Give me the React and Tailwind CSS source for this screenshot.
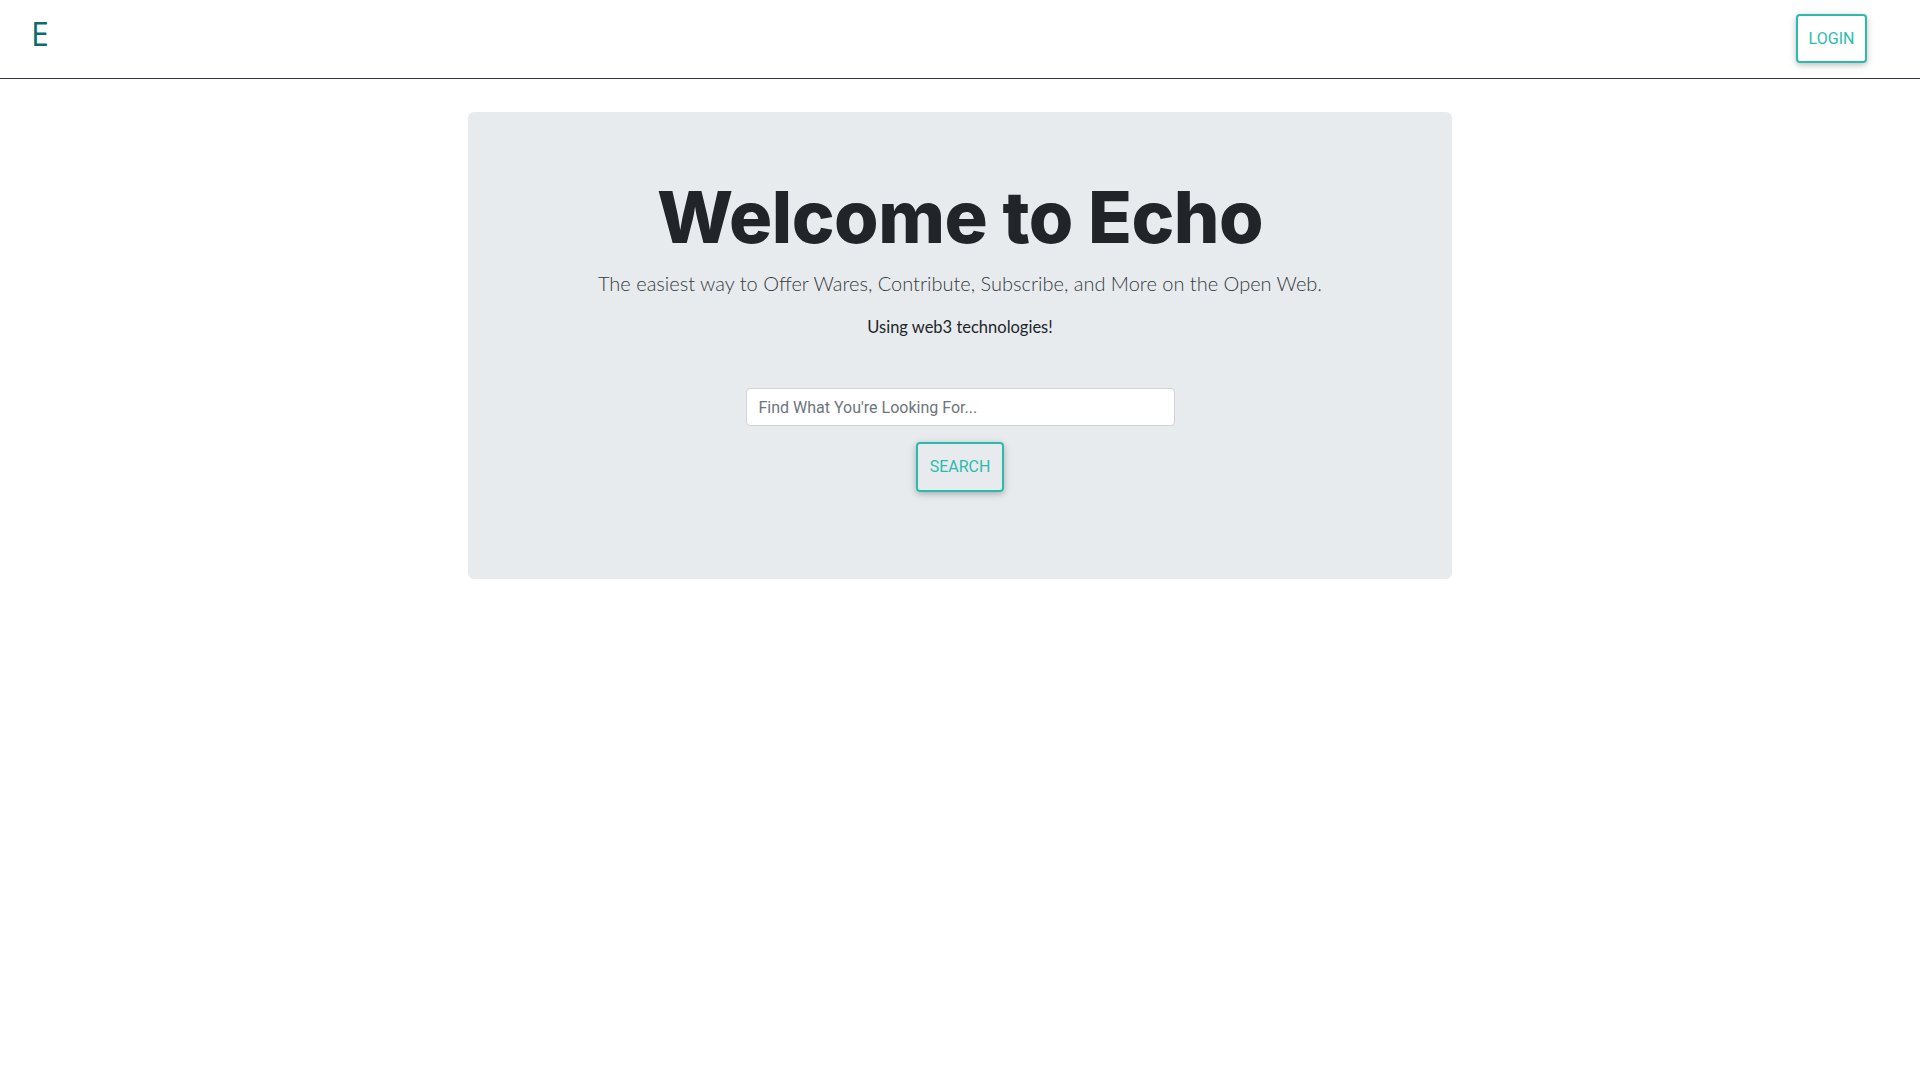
import { useState } from "react";

export default function App() {
  const [query, setQuery] = useState("");

  return (
    <div className="min-h-screen bg-white" style={{ fontFamily: "Roboto, sans-serif" }}>
      <nav className="h-[79px] border-b border-[#343a40] flex items-start justify-between pl-[31px] pr-[53px]">
        <a
          href="#"
          className="mt-[12px] text-[32px] leading-[44px] text-[#0f6a6d] font-['Open_Sans',sans-serif]"
        >
          E
        </a>
        <button className="mt-[14px] w-[71px] h-[49px] border-2 border-[#2bbbad] rounded-[4px] text-[#2bbbad] text-[16px] shadow-[0_2px_5px_0_rgba(0,0,0,0.16),0_2px_10px_0_rgba(0,0,0,0.12)] bg-white">
          LOGIN
        </button>
      </nav>

      <main className="pt-[33px] flex justify-center">
        <section className="w-[984px] h-[467px] bg-[#e8ebee] rounded-[6px] flex flex-col items-center pt-[62px]">
          <h1 className="text-[72px] leading-[86px] font-extrabold text-[#212529] tracking-[-0.5px] font-['Inter',sans-serif]">
            Welcome to Echo
          </h1>
          <p className="mt-[8px] text-[20px] leading-[30px] font-light text-[#343a40] font-['Lato',sans-serif]">
            The easiest way to Offer Wares, Contribute, Subscribe, and More on the Open Web.
          </p>
          <p className="mt-[17px] text-[16.5px] leading-[24px] text-[#212529] font-['Lato',sans-serif]">
            Using web3 technologies!
          </p>

          <input
            type="text"
            value={query}
            onChange={(e) => setQuery(e.target.value)}
            placeholder="Find What You're Looking For..."
            className="mt-[49px] w-[429px] h-[38px] bg-white border border-[#ced4da] rounded-[4px] px-[12px] text-[16px] text-[#495057] placeholder-[#6c757d] outline-none"
          />
          <button className="mt-[16px] w-[88px] h-[50px] border-2 border-[#2bbbad] rounded-[4px] text-[#2bbbad] text-[16px] shadow-[0_2px_5px_0_rgba(0,0,0,0.16),0_2px_10px_0_rgba(0,0,0,0.12)]">
            SEARCH
          </button>
        </section>
      </main>
    </div>
  );
}
